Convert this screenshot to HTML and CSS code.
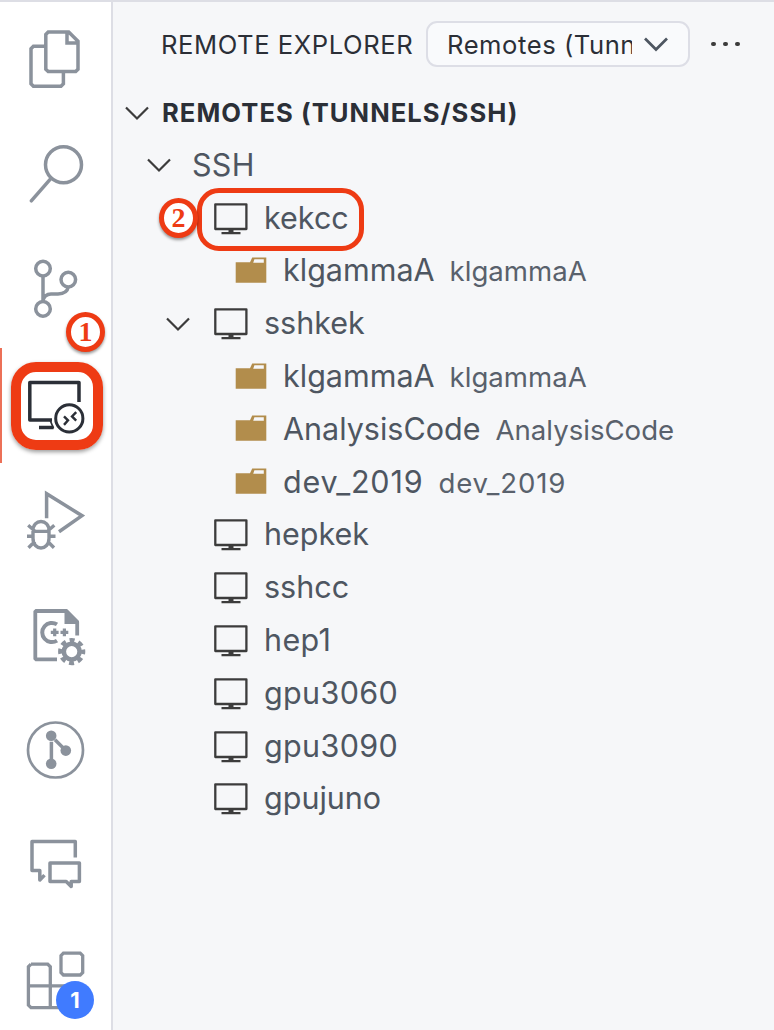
FILE: index.html
```html
<!DOCTYPE html>
<html lang="en">
<head>
<meta charset="utf-8">
<title>Remote Explorer</title>
<link rel="stylesheet" href="styles.css">
</head>
<body>
<svg class="symbols" width="0" height="0">
  <symbol id="chevron" viewBox="0 0 26 16"><path d="M2 2.5 13 13.5 24 2.5"/></symbol>
  <symbol id="monitor" viewBox="0 0 34 32"><path d="M1.3 1.3H32.4V26H1.3ZM17 26v4M7.5 30.2H26.5" fill="none" stroke="#3c3c3c" stroke-width="2.3" stroke-linejoin="round"/><path d="M14.5 26h5v4h-5z" fill="#3c3c3c"/></symbol>
  <symbol id="folder" viewBox="0 0 32 26"><path fill-rule="evenodd" fill="#b28d4c" d="M.7 5.2H15L17.2.4H31.3V25.7H.7ZM19.4 2.3 18.2 5.7H28.8V2.3Z"/></symbol>
</svg>
<div class="app">
  <nav class="activity">
    <div class="slot"><svg viewBox="0 2 111 115.2"><path d="M48.2 32H68.7L78 41.3V69.2L75.7 71.5H48.2L45.8 69.2V34.4ZM67 32V43H78M45.8 46.3H33.4L31 48.7V83.8L33.4 86.2H61L63.4 83.8V71.5"/></svg></div>
    <div class="slot"><svg viewBox="0 117.2 111 115.2"><circle cx="63.5" cy="165" r="18"/><path d="M51 178.5 31.3 201" stroke-linecap="round"/></svg></div>
    <div class="slot"><svg viewBox="0 232.4 111 115.2"><circle cx="43" cy="269" r="7.3"/><circle cx="68.3" cy="280" r="7.3"/><circle cx="43" cy="309.3" r="7.3"/><path d="M43 276.3V302M43 302C43 297 47 294.3 51 294.3H58C64 294.3 67.5 292 68.3 287.2"/></svg></div>
    <div class="slot active"><svg viewBox="0 347.6 111 115.2"><path d="M79 401.5V382.2H29.8V419.7H52M39 427H53.5" stroke-linejoin="round"/><path d="M50 419.5 53.5 428" stroke-width="1.6"/><circle cx="69.3" cy="418" r="13.6" stroke-width="3"/><path d="M64 416 68 420 64 424.5M76.2 411.7 72 416 76.2 420.3" stroke-width="2.4"/></svg></div>
    <div class="slot"><svg viewBox="0 462.8 111 115.2"><path d="M46.6 518V493.5L82 515.5 59 531.5"/><path d="M32 531.2H50.5M33 531C32.5 518 49.5 518 49 531V538C49 551 33 551 33 538ZM27 536H33M49 536H55.5M28.2 525 34.5 530.5M54.3 525 48 530.5M28.5 547.5 35 541M54 547.5 47.5 541" stroke-width="3.4"/></svg></div>
    <div class="slot"><svg viewBox="0 578 111 115.2"><path d="M57 659.3H36.2L35.3 658.4V611.8L36.2 611H66L77.2 622.5V635.5" stroke-width="3.8"/><path class="solid" d="M64.5 609.5H67.5L79 621V624H64.5Z"/><path d="M57 624.4A9.6 9.6 0 1 0 57 640.6" stroke-width="4"/><path d="M50.8 632.3H58.6M60.5 632.3H68.3M54.7 628.4V636.2M64.4 628.4V636.2" stroke-width="3.2"/><circle cx="71.7" cy="651.6" r="7.9" stroke-width="4.6"/><circle cx="71.7" cy="651.6" r="11.2" stroke-width="4.8" stroke-dasharray="4.9 3.896" stroke-dashoffset="2.4"/></svg></div>
    <div class="slot"><svg viewBox="0 693.2 111 115.2"><circle cx="55.5" cy="750.2" r="27.5" stroke-width="2.7"/><g class="solid"><circle cx="51.2" cy="736" r="5.3"/><circle cx="65.8" cy="750.8" r="5.3"/><circle cx="51.2" cy="764" r="5.3"/></g><path d="M51.4 742V760M55 740 63 748"/></svg></div>
    <div class="slot"><svg viewBox="0 808.4 111 115.2"><path d="M75.3 857.8V842H32V871H39.8V880.5L44.5 875.5M50 863.5H79.4V882H71.2V887L66.2 882H50Z" stroke-linejoin="round"/></svg></div>
    <div class="slot"><svg viewBox="0 923.6 111 115.2"><path d="M31 963.8H47.7L50.3 966.4V985.5H70.5M50.3 985.5V1007.3H70M28.3 985.5H50.3M50.3 1007.3H31L28.4 1004.7V966.4L31 963.8M63.4 952.7H80.2L82.7 955.2V972.2L80.2 974.6H63.4L61 972.2V955.2Z" stroke-width="3.3"/></svg><span class="count">1</span></div>
  </nav>
  <main class="sidebar">
    <header class="head">
      <h1 class="title">REMOTE EXPLORER</h1>
      <div class="select"><span class="value">Remotes (Tunnels/SSH)</span><svg class="chev"><use href="#chevron"/></svg></div>
      <div class="more"><i></i><i></i><i></i></div>
    </header>
    <div class="section"><svg class="chev"><use href="#chevron"/></svg><h2 class="section-title">REMOTES (TUNNELS/SSH)</h2></div>
    <ul class="tree">
      <li class="row group"><svg class="chev"><use href="#chevron"/></svg><span class="label">SSH</span></li>
      <li class="row host"><svg class="monitor"><use href="#monitor"/></svg><span class="label">kekcc</span><span class="frame"></span><span class="step step-two">2</span></li>
      <li class="row dir"><svg class="folder"><use href="#folder"/></svg><span class="label">klgammaA</span><span class="desc">klgammaA</span></li>
      <li class="row host open"><svg class="chev"><use href="#chevron"/></svg><svg class="monitor"><use href="#monitor"/></svg><span class="label">sshkek</span></li>
      <li class="row dir"><svg class="folder"><use href="#folder"/></svg><span class="label">klgammaA</span><span class="desc">klgammaA</span></li>
      <li class="row dir"><svg class="folder"><use href="#folder"/></svg><span class="label">AnalysisCode</span><span class="desc">AnalysisCode</span></li>
      <li class="row dir spaced"><svg class="folder"><use href="#folder"/></svg><span class="label">dev_2019</span><span class="desc">dev_2019</span></li>
      <li class="row host"><svg class="monitor"><use href="#monitor"/></svg><span class="label">hepkek</span></li>
      <li class="row host"><svg class="monitor"><use href="#monitor"/></svg><span class="label">sshcc</span></li>
      <li class="row host numbered"><svg class="monitor"><use href="#monitor"/></svg><span class="label">hep1</span></li>
      <li class="row host numbered"><svg class="monitor"><use href="#monitor"/></svg><span class="label">gpu3060</span></li>
      <li class="row host numbered"><svg class="monitor"><use href="#monitor"/></svg><span class="label">gpu3090</span></li>
      <li class="row host"><svg class="monitor"><use href="#monitor"/></svg><span class="label">gpujuno</span></li>
    </ul>
  </main>
  <span class="highlight"></span>
  <span class="step step-one">1</span>
</div>
</body>
</html>
```
FILE: styles.css
```css
* { box-sizing: border-box; }
body { margin: 0; font-family: Inter, "Liberation Sans", sans-serif; color: #2b2f37; background: #f6f7f9; }
.symbols { position: absolute; }
.app { position: relative; display: flex; width: 774px; height: 1030px; overflow: hidden; border-top: 2px solid #dddee5; }
.activity { width: 113px; flex: none; background: #fff; border-right: 2px solid #dddee5; }
.slot { position: relative; height: 115.2px; }
.slot svg { display: block; width: 111px; height: 115.2px; fill: none; stroke: #8b929c; stroke-width: 3.5; }
.slot .solid { fill: #8b929c; stroke: none; }
.slot.active { border-left: 2px solid #ec7057; }
.slot.active svg { margin-left: -2px; stroke: #2b2f37; }
.count { position: absolute; left: 56px; top: 57px; width: 38px; height: 38px; border-radius: 50%; background: #407bff; color: #fff; font-size: 22px; font-weight: 700; line-height: 39px; text-align: center; }
.sidebar { flex: 1; min-width: 0; background: #f6f7f9; }
.head { display: flex; align-items: center; height: 84px; padding-left: 48px; }
.title { width: 265px; margin: 0; font-size: 25.6px; font-weight: 400; letter-spacing: .57px; white-space: nowrap; }
.select { display: flex; align-items: center; width: 264px; height: 46px; padding: 0 18px 0 19px; border: 2px solid #dddee6; border-radius: 11px; background: #f9fafc; }
.value { width: 185px; overflow: hidden; white-space: nowrap; font-size: 25.6px; letter-spacing: .55px; }
.chev { flex: none; width: 26px; height: 16px; fill: none; stroke: #3c3c3c; stroke-width: 2.2; }
.select .chev { margin-left: 11px; stroke: #4e5661; stroke-width: 2.7; }
.more { display: flex; gap: 7.4px; margin-left: 21px; }
.more i { width: 4.8px; height: 4.8px; border-radius: 50%; background: #3c3c3c; }
.section { display: flex; align-items: center; height: 53px; padding-left: 11px; }
.section-title { margin: 0 0 0 12px; font-size: 25.6px; font-weight: 700; letter-spacing: 1.05px; white-space: nowrap; }
.tree { margin: 0; padding: 0; list-style: none; }
.row { position: relative; display: flex; align-items: center; height: 52.8px; white-space: nowrap; }
.label { padding-bottom: 2px; font-size: 30.5px; color: #4e5661; }
.desc { margin-left: 15px; padding-top: 1px; font-size: 27.6px; color: #59616c; }
.group { padding-left: 33px; }
.group .label { margin-left: 20px; letter-spacing: .3px; }
.host { padding-left: 101px; }
.host.open { padding-left: 52px; }
.open .chev { margin-right: 23px; }
.monitor { flex: none; width: 34px; height: 32px; margin-top: 1px; }
.host .label { margin-left: 16px; }
.numbered .label { letter-spacing: .35px; }
.dir { padding-left: 122px; }
.folder { flex: none; width: 32px; height: 26px; margin-bottom: 2px; }
.dir .label { margin-left: 16px; }
.spaced .label, .spaced .desc { letter-spacing: .85px; }
.frame { position: absolute; left: 84px; top: -4px; width: 167px; height: 63px; border: 5.6px solid #ee3b14; border-radius: 22px; }
.highlight { position: absolute; left: 11px; top: 360px; width: 92px; height: 88px; border: 10px solid #ee3b14; border-radius: 25px; box-shadow: 0 2px 4px rgba(0,0,0,.4); }
.step { position: absolute; width: 39px; height: 40px; border: 5px solid #ee3b14; border-radius: 50%; background: #fff; color: #ee3b14; font: 700 28px/29px "Liberation Serif", serif; text-align: center; box-shadow: 0 2px 3px rgba(0,0,0,.4); }
.step-one { left: 66px; top: 310px; }
.step-two { left: 46px; top: 6px; }
```
